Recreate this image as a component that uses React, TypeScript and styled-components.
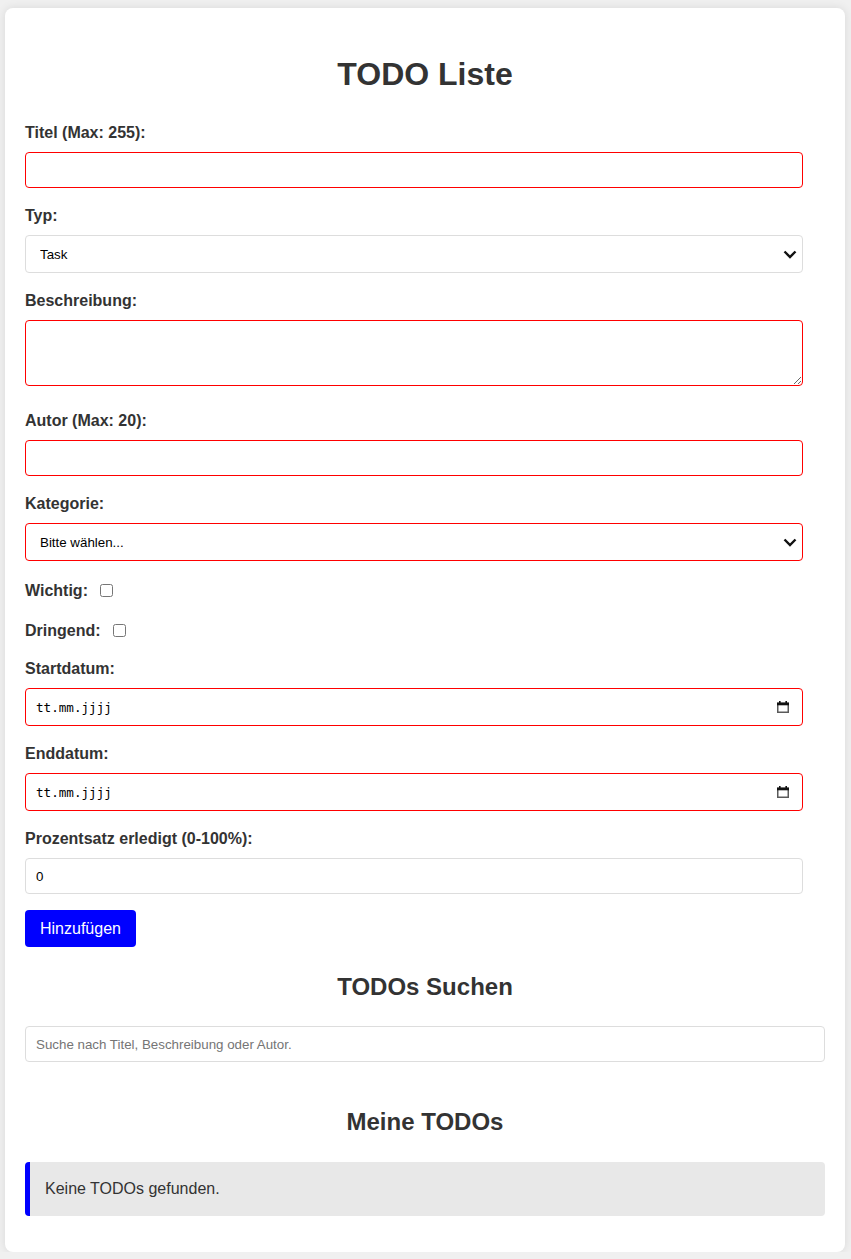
import React from "react";
import styled, { createGlobalStyle } from "styled-components";

const GlobalStyle = createGlobalStyle`
  html, body {
    margin: 0;
    padding: 0;
    background: #f0f0f0;
    font-family: "Liberation Sans", Arial, sans-serif;
    color: #333;
  }
  * { box-sizing: border-box; }
`;

const Card = styled.main`
  width: 840px;
  margin: 8px 0 0 5px;
  padding: 20px;
  background: #fff;
  border-radius: 8px;
  box-shadow: 0 0 10px rgba(0, 0, 0, 0.1);
`;

const Title = styled.h1`
  margin: 28px 0 31px;
  font-size: 32px;
  line-height: 37px;
  font-weight: bold;
  text-align: center;
  color: #333;
`;

const Form = styled.form`
  display: flex;
  flex-direction: column;
  align-items: flex-start;
`;

const Group = styled.div<{ $gap?: number }>`
  display: flex;
  flex-direction: column;
  width: 100%;
  margin-bottom: ${(p) => p.$gap ?? 19}px;
`;

const Label = styled.label`
  display: block;
  font-size: 16px;
  line-height: 18px;
  font-weight: bold;
  color: #333;
  margin-bottom: 10px;
`;

const fieldBase = `
  width: calc(100% - 22px);
  border-radius: 4px;
  font-family: "Liberation Sans", Arial, sans-serif;
  font-size: 13.333px;
  color: #000;
  background-color: #fff;
  outline: none;
`;

const TextInput = styled.input<{ $invalid?: boolean }>`
  ${fieldBase}
  height: 36px;
  padding: 0 10px;
  border: 1px solid ${(p) => (p.$invalid ? "#ff0000" : "#dddddd")};
`;

const chevron =
  "data:image/svg+xml;utf8," +
  encodeURIComponent(
    '<svg xmlns="http://www.w3.org/2000/svg" width="14" height="9" viewBox="0 0 14 9"><path d="M1.5 1.5 L7 7 L12.5 1.5" fill="none" stroke="#111" stroke-width="2.4"/></svg>'
  );

const Select = styled.select<{ $invalid?: boolean }>`
  ${fieldBase}
  appearance: none;
  -webkit-appearance: none;
  height: 38px;
  padding: 0 36px 0 14px;
  border: 1px solid ${(p) => (p.$invalid ? "#ff0000" : "#dddddd")};
  background-image: url("${chevron}");
  background-repeat: no-repeat;
  background-position: right 5px center;
  background-size: 14px 9px;
`;

const TextArea = styled.textarea<{ $invalid?: boolean }>`
  ${fieldBase}
  display: block;
  height: 66px;
  padding: 10px;
  margin-bottom: 7px;
  border: 1px solid ${(p) => (p.$invalid ? "#ff0000" : "#dddddd")};
`;

const DateBox = styled.div<{ $invalid?: boolean }>`
  width: calc(100% - 22px);
  height: 38px;
  display: flex;
  align-items: center;
  justify-content: space-between;
  padding: 0 13px 0 10px;
  border: 1px solid ${(p) => (p.$invalid ? "#ff0000" : "#dddddd")};
  border-radius: 4px;
  background: #fff;
`;

const DateText = styled.input`
  flex: 1;
  border: none;
  outline: none;
  padding: 0;
  background: transparent;
  font-family: "DejaVu Sans Mono", "Liberation Mono", monospace;
  font-size: 12.6px;
  color: #000;
  &::placeholder { color: #000; opacity: 1; }
`;

const CheckRow = styled.div`
  display: flex;
  align-items: center;
  height: 21px;
  margin-bottom: 19px;
`;

const CheckLabel = styled.label`
  font-size: 16px;
  font-weight: bold;
  line-height: 18px;
  color: #333;
  margin-right: 8px;
`;

const Checkbox = styled.input`
  width: 13px;
  height: 13px;
  margin: 0 0 0 4px;
`;

const AddButton = styled.button`
  height: 37px;
  padding: 0 15px;
  border: none;
  border-radius: 4px;
  background: #0000ff;
  color: #fff;
  font-family: "Liberation Sans", Arial, sans-serif;
  font-size: 16px;
  cursor: pointer;
`;

const SectionTitle = styled.h2<{ $bottom: number }>`
  margin: 26px 0 ${(p) => p.$bottom}px;
  font-size: 24px;
  line-height: 28px;
  font-weight: bold;
  text-align: center;
  color: #333;
`;

const SearchInput = styled.input`
  width: 100%;
  height: 36px;
  padding: 0 10px;
  margin-bottom: 20px;
  border: 1px solid #dddddd;
  border-radius: 4px;
  font-family: "Liberation Sans", Arial, sans-serif;
  font-size: 13.333px;
  color: #000;
  outline: none;
  &::placeholder { color: #757575; }
`;

const EmptyBox = styled.div`
  margin-bottom: 16px;
  padding: 15px;
  background: #e8e8e8;
  border-left: 5px solid #0000ff;
  border-radius: 4px;
  font-size: 16px;
  line-height: 24px;
  color: #333;
`;

const CalendarIcon = () => (
  <svg width="12" height="12" viewBox="0 0 12 12" aria-hidden="true">
    <rect x="0.75" y="2.5" width="10.5" height="8.75" fill="none" stroke="#5a5a5a" strokeWidth="1.5" />
    <rect x="0" y="1.5" width="12" height="2.8" fill="#111" />
    <rect x="2" y="0" width="1.6" height="2" fill="#111" />
    <rect x="8.4" y="0" width="1.6" height="2" fill="#111" />
  </svg>
);

const DateField = ({ id }: { id: string }) => (
  <DateBox $invalid>
    <DateText id={id} type="text" placeholder="tt.mm.jjjj" />
    <CalendarIcon />
  </DateBox>
);

export default function App() {
  return (
    <>
      <GlobalStyle />
      <Card>
        <Title>TODO Liste</Title>
        <Form onSubmit={(e) => e.preventDefault()}>
          <Group>
            <Label htmlFor="titel">Titel (Max: 255):</Label>
            <TextInput id="titel" type="text" $invalid />
          </Group>
          <Group>
            <Label htmlFor="typ">Typ:</Label>
            <Select id="typ" defaultValue="Task">
              <option value="Task">Task</option>
              <option value="Bug">Bug</option>
            </Select>
          </Group>
          <Group>
            <Label htmlFor="beschreibung">Beschreibung:</Label>
            <TextArea id="beschreibung" $invalid />
          </Group>
          <Group>
            <Label htmlFor="autor">Autor (Max: 20):</Label>
            <TextInput id="autor" type="text" $invalid />
          </Group>
          <Group>
            <Label htmlFor="kategorie">Kategorie:</Label>
            <Select id="kategorie" defaultValue="" $invalid>
              <option value="">Bitte wählen...</option>
              <option value="privat">Privat</option>
            </Select>
          </Group>
          <CheckRow>
            <CheckLabel htmlFor="wichtig">Wichtig:</CheckLabel>
            <Checkbox id="wichtig" type="checkbox" />
          </CheckRow>
          <CheckRow>
            <CheckLabel htmlFor="dringend">Dringend:</CheckLabel>
            <Checkbox id="dringend" type="checkbox" />
          </CheckRow>
          <Group>
            <Label htmlFor="start">Startdatum:</Label>
            <DateField id="start" />
          </Group>
          <Group>
            <Label htmlFor="ende">Enddatum:</Label>
            <DateField id="ende" />
          </Group>
          <Group $gap={16}>
            <Label htmlFor="prozent">Prozentsatz erledigt (0-100%):</Label>
            <TextInput id="prozent" type="number" defaultValue={0} />
          </Group>
          <AddButton type="submit">Hinzufügen</AddButton>
        </Form>
        <SectionTitle $bottom={25}>TODOs Suchen</SectionTitle>
        <SearchInput type="text" placeholder="Suche nach Titel, Beschreibung oder Autor." />
        <SectionTitle $bottom={26}>Meine TODOs</SectionTitle>
        <EmptyBox>Keine TODOs gefunden.</EmptyBox>
      </Card>
    </>
  );
}
